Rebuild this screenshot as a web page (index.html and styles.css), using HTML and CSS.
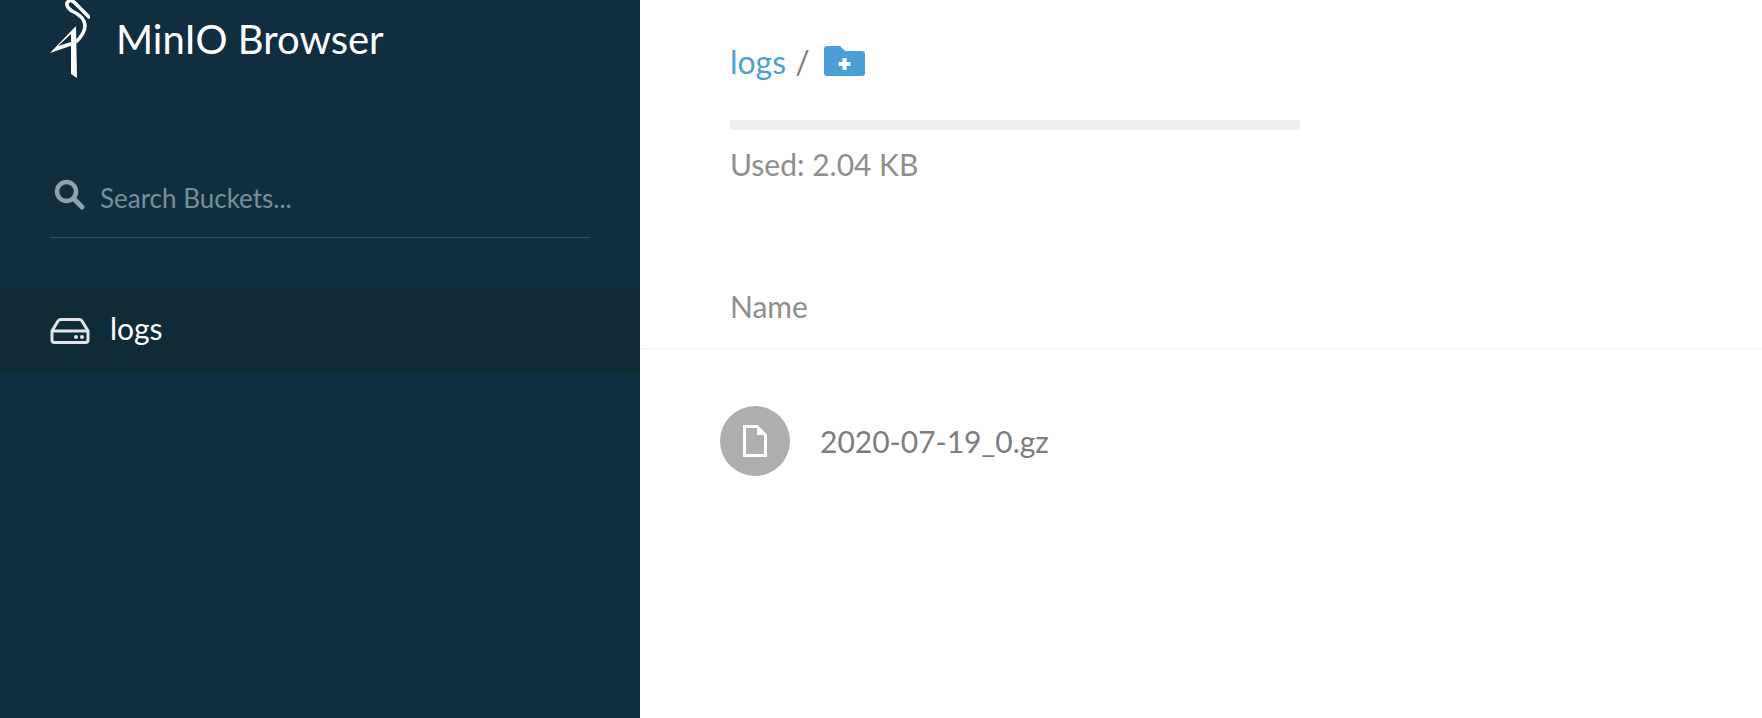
FILE: index.html
```html
<!DOCTYPE html>
<html lang="en">
<head>
<meta charset="utf-8">
<title>MinIO Browser</title>
<link rel="stylesheet" href="styles.css">
</head>
<body>
<div class="app">
  <aside class="sidebar">
    <header class="brand">
      <svg class="logo" width="40" height="80" viewBox="0 0 40 80" aria-hidden="true">
        <path class="logo-stroke" d="M40 20 L25 5 Q20 0 17 5 Q16 9 22 13 Q35 19 35 28 Q35 35 26 44"/>
        <path class="logo-fill" fill-rule="evenodd" d="M0 55 L25 29 L26 46 L0 55 Z M8 48 L21 44 L21 36 Z"/>
        <path class="logo-fill" d="M21 36 L26 28 L27 80 L21 76 Z"/>
      </svg>
      <h1 class="brand-title">MinIO Browser</h1>
    </header>
    <div class="search">
      <svg class="search-icon" width="32" height="32" viewBox="0 0 32 32" aria-hidden="true">
        <circle cx="12.5" cy="12.5" r="9.5"/>
        <path d="M19.5 19.5 L28 28"/>
      </svg>
      <input class="search-input" type="text" placeholder="Search Buckets...">
    </div>
    <nav class="buckets">
      <a class="bucket bucket-active">
        <svg class="bucket-icon" width="40" height="26" viewBox="0 0 40 26" aria-hidden="true">
          <path class="bucket-outline" d="M2 13 L8 3 Q9 1.500 11 1.500 H29 Q31 1.500 32 3 L38 13 V22 Q38 24.500 35.500 24.500 H4.500 Q2 24.500 2 22 Z M2 13 H38"/>
          <circle class="bucket-dot" cx="26" cy="19" r="2"/>
          <circle class="bucket-dot" cx="32" cy="19" r="2"/>
        </svg>
        <span class="bucket-name">logs</span>
      </a>
    </nav>
  </aside>
  <main class="content">
    <section class="summary">
      <div class="crumbs">
        <a class="crumb-link">logs</a>
        <span class="crumb-sep">/</span>
        <svg class="add-folder" width="41" height="30" viewBox="0 0 41 30" aria-hidden="true">
          <path class="folder-body" d="M3 0 H16 L21 5 H38 Q41 5 41 8 V27 Q41 30 38 30 H3 Q0 30 0 27 V3 Q0 0 3 0 Z"/>
          <path class="folder-plus" d="M20.500 12 V24 M14.500 18 H26.500"/>
        </svg>
      </div>
      <div class="usage-bar"></div>
      <div class="usage-text">Used: 2.04 KB</div>
    </section>
    <div class="list-head">Name</div>
    <div class="file-row">
      <span class="file-badge">
        <svg width="24" height="32" viewBox="0 0 24 32" aria-hidden="true">
          <path class="file-sheet" d="M1.500 1.500 H14 L22.500 10 V30.500 H1.500 Z"/>
          <path class="file-fold" d="M14 1.500 V10 H22.500 Z"/>
        </svg>
      </span>
      <span class="file-name">2020-07-19_0.gz</span>
    </div>
  </main>
</div>
</body>
</html>
```
FILE: styles.css
```css
* { box-sizing: border-box; }
html, body { margin: 0; height: 100%; }
body {
  font-family: Lato, "Open Sans", sans-serif;
  background: #fff;
  overflow: hidden;
}
.app { display: flex; height: 718px; }

.sidebar {
  width: 640px;
  flex: none;
  background: #102e40;
  display: flex;
  flex-direction: column;
}
.brand {
  height: 80px;
  padding-left: 50px;
  display: flex;
  align-items: flex-start;
  gap: 26px;
}
.logo { flex: none; margin-top: -2px; }
.logo-stroke { fill: none; stroke: #fff; stroke-width: 3.500; }
.logo-fill { fill: #fff; }
.brand-title {
  margin: 15px 0 0;
  font-size: 40px;
  line-height: 48px;
  font-weight: 400;
  color: #fff;
}

.search {
  margin: 94px 50px 0;
  height: 64px;
  border-bottom: 1px solid #33505f;
  display: flex;
  align-items: center;
  gap: 14px;
  padding-bottom: 16px;
}
.search-icon { flex: none; margin: -6px 0 0 4px; }
.search-icon circle { fill: none; stroke: #8fa3ad; stroke-width: 4.500; }
.search-icon path { fill: none; stroke: #8fa3ad; stroke-width: 5; stroke-linecap: round; }
.search-input {
  flex: 1;
  border: 0;
  background: none;
  outline: 0;
  padding: 0;
  font: 26px Lato, sans-serif;
  color: #fff;
}
.search-input::placeholder { color: #76909b; opacity: 1; }

.buckets { margin-top: 50px; }
.bucket {
  height: 86px;
  padding: 0 0 6px 50px;
  display: flex;
  align-items: center;
  gap: 20px;
  background: #102b38;
}
.bucket-icon { margin-top: 5px; }
.bucket-outline { fill: none; stroke: #dfe5e8; stroke-width: 3; }
.bucket-dot { fill: #dfe5e8; }
.bucket-name { font-size: 30px; color: #fff; }

.content { flex: 1; min-width: 0; }
.summary { padding: 36px 0 0 90px; }
.crumbs { display: flex; align-items: center; height: 50px; gap: 12px; }
.crumb-link { font-size: 32px; color: #4f9fd3; }
.crumb-sep { font-size: 32px; color: #808080; margin: 0 2px 0 -3px; }
.add-folder { flex: none; }
.folder-body { fill: #4a9fd8; }
.folder-plus { fill: none; stroke: #fff; stroke-width: 4; }
.usage-bar {
  width: 570px;
  height: 10px;
  margin-top: 34px;
  border-radius: 3px;
  background: #eeeeee;
}
.usage-text {
  margin-top: 16px;
  font-size: 30px;
  line-height: 36px;
  color: #8e8e8e;
}

.list-head {
  margin-top: 98px;
  height: 69px;
  padding: 8px 0 0 90px;
  font-size: 30px;
  line-height: 36px;
  color: #8e8e8e;
  border-bottom: 1px solid #eeeeee;
}
.file-row {
  padding: 57px 0 0 80px;
  display: flex;
  align-items: center;
  gap: 30px;
}
.file-badge {
  width: 70px;
  height: 70px;
  border-radius: 50%;
  background: #afafaf;
  display: flex;
  align-items: center;
  justify-content: center;
}
.file-sheet { fill: #afafaf; stroke: #fff; stroke-width: 3; }
.file-fold { fill: #fff; }
.file-name { font-size: 30px; color: #7d7d7d; }
```
